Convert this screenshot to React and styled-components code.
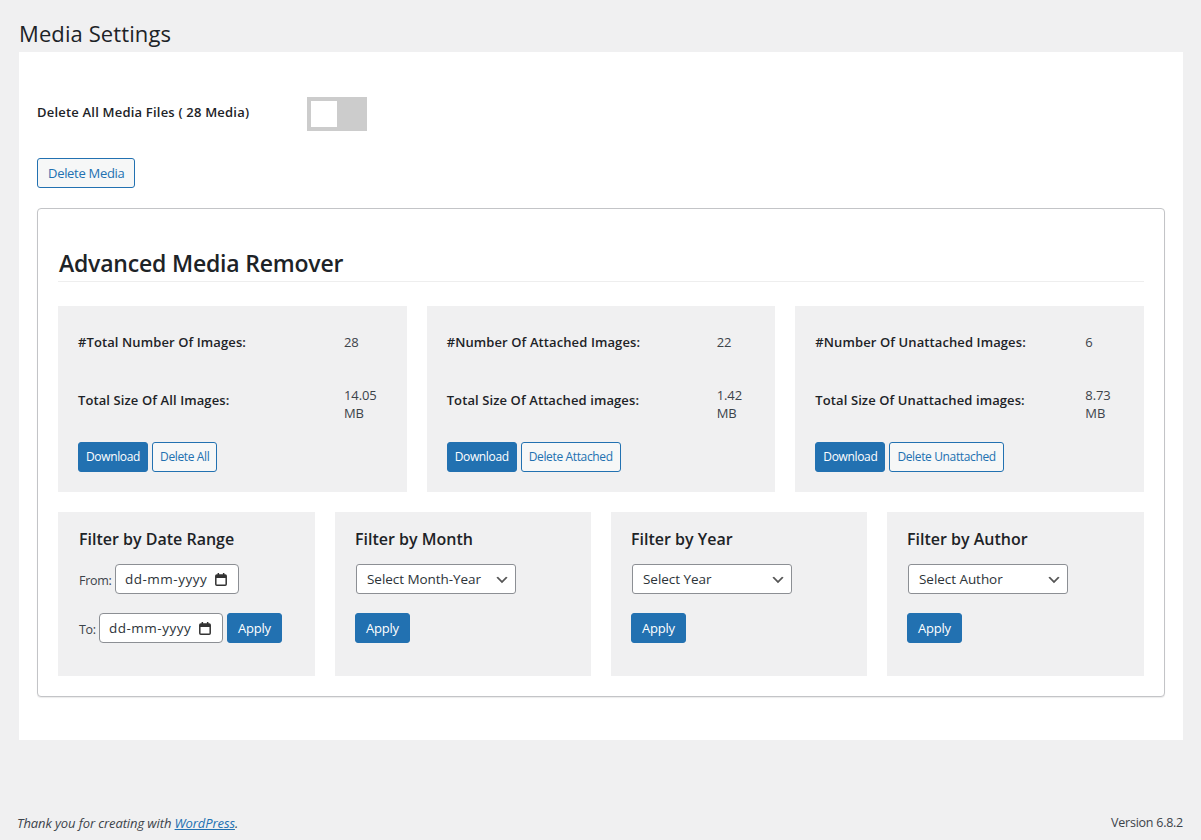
import React from "react";
import styled, { createGlobalStyle } from "styled-components";

const Global = createGlobalStyle`
  html, body { margin: 0; padding: 0; background: #f0f0f1; }
  body {
    font-family: "Open Sans", "Noto Sans", sans-serif;
    font-size: 13px;
    line-height: 1.4;
    color: #3c434a;
  }
  * { box-sizing: border-box; }
`;

const Page = styled.div`
  width: 1201px;
  height: 840px;
  padding-left: 19px;
  padding-right: 18px;
  display: flex;
  flex-direction: column;
  overflow: hidden;
`;

const Title = styled.h1`
  margin: 0;
  height: 52px;
  padding-top: 19px;
  font-size: 22px;
  font-weight: 400;
  line-height: 29px;
  color: #1d2327;
  letter-spacing: 0.1px;
`;

const Panel = styled.main`
  background: #fff;
  height: 688px;
  padding: 45px 18px 0;
`;

const ToggleRow = styled.div`
  display: flex;
  align-items: center;
  height: 34px;
`;

const ToggleLabel = styled.label`
  width: 270px;
  padding-bottom: 4px;
  font-size: 13px;
  font-weight: 600;
  color: #1d2327;
  letter-spacing: 0.2px;
`;

const Toggle = styled.span`
  display: block;
  width: 60px;
  height: 34px;
  padding: 4px;
  background: #ccc;
  &::before {
    content: "";
    display: block;
    width: 26px;
    height: 26px;
    background: #fff;
  }
`;

const Button = styled.button`
  display: inline-block;
  height: 30px;
  padding: 0 ${(p) => p.$px || 10}px;
  border-radius: 3px;
  border: 1px solid #2271b1;
  background: ${(p) => (p.$primary ? "#2271b1" : "#f6f7f7")};
  color: ${(p) => (p.$primary ? "#fff" : "#2271b1")};
  font-family: inherit;
  font-size: ${(p) => p.$fs || 12}px;
  letter-spacing: ${(p) => p.$ls ?? -0.3}px;
  line-height: 1;
  white-space: nowrap;
`;

const DeleteMediaWrap = styled.div`
  margin-top: 27px;
  height: 30px;
`;

const Card = styled.section`
  margin-top: 20px;
  height: 489px;
  padding: 20px;
  background: #fff;
  border: 1px solid #c3c4c7;
  border-radius: 4px;
  box-shadow: 0 1px 1px rgba(0, 0, 0, 0.08);
`;

const CardTitle = styled.h2`
  margin: 0;
  height: 53px;
  padding: 19px 0 0 1px;
  font-size: 23px;
  font-weight: 600;
  line-height: 31px;
  color: #1d2327;
  border-bottom: 1px solid #eee;
  letter-spacing: -0.2px;
`;

const StatsGrid = styled.div`
  margin-top: 24px;
  display: grid;
  grid-template-columns: repeat(3, minmax(0, 1fr));
  gap: 20px;
`;

const StatCard = styled.div`
  height: 186px;
  padding: 20px 20px 0;
  background: #f0f0f1;
  display: flex;
  flex-direction: column;
`;

const StatRow = styled.div`
  display: flex;
  align-items: center;
  height: ${(p) => p.$h}px;
`;

const StatLabel = styled.strong`
  width: ${(p) => p.$w}px;
  flex: none;
  font-weight: 600;
  color: #1d2327;
  letter-spacing: 0.1px;
`;

const StatValue = styled.span`
  width: 42px;
  margin-top: ${(p) => p.$mt || 0}px;
  line-height: 18px;
  letter-spacing: -0.1px;
`;

const ButtonRow = styled.div`
  display: flex;
  gap: 4px;
`;

const FilterGrid = styled.div`
  margin-top: 20px;
  display: grid;
  grid-template-columns: 257px 256px 256px 257px;
  gap: 20px;
`;

const FilterCard = styled.div`
  height: 164px;
  padding: 14px 20px 0 ${(p) => p.$pl || 20}px;
  background: #f0f0f1;
`;

const FilterTitle = styled.h3`
  margin: 0 0 12px;
  font-size: 16px;
  font-weight: 600;
  line-height: 26px;
  color: #1d2327;
  letter-spacing: 0;
`;

const DateRow = styled.div`
  display: flex;
  align-items: center;
  height: 30px;
  gap: 4px;
  margin-bottom: ${(p) => p.$mb || 0}px;
`;

const DateLabel = styled.span`
  width: ${(p) => p.$w}px;
  flex: none;
  font-size: 12.5px;
  padding-top: 3px;
  letter-spacing: -0.3px;
  white-space: nowrap;
`;

const DateField = styled.div`
  width: 124px;
  height: 30px;
  padding: 0 11px 0 9px;
  display: flex;
  align-items: center;
  justify-content: space-between;
  background: #fff;
  border: 1px solid #8c8f94;
  border-radius: 4px;
  color: #2c3338;
  font-size: 13.5px;
  letter-spacing: 0.5px;
`;

const Select = styled.select`
  display: block;
  width: 160px;
  height: 30px;
  margin: 0 0 19px 1px;
  padding: 0 24px 0 10px;
  appearance: none;
  background: #fff url("data:image/svg+xml,%3Csvg xmlns='http://www.w3.org/2000/svg' width='20' height='20' viewBox='0 0 20 20'%3E%3Cpath d='M5 6l5 5 5-5 2 1-7 7-7-7z' fill='%23555'/%3E%3C/svg%3E") no-repeat right 5px top 55%;
  background-size: 16px 16px;
  border: 1px solid #8c8f94;
  border-radius: 3px;
  color: #2c3338;
  font-family: inherit;
  font-size: 13.5px;
  letter-spacing: -0.05px;
`;

const Footer = styled.footer`
  display: flex;
  justify-content: space-between;
  margin-top: 74px;
  margin-left: -2px;
  line-height: 18px;
`;

const Thanks = styled.em`
  font-style: italic;
  font-size: 13px;
  letter-spacing: -0.1px;
`;

const Version = styled.span`
  font-size: 12.5px;
  letter-spacing: -0.25px;
`;

const FooterLink = styled.a`
  color: #2271b1;
  text-decoration: underline;
`;

const CalendarIcon = () => (
  <svg width="12" height="13" viewBox="0 0 12 13" aria-hidden="true">
    <rect x="0.8" y="2" width="10.4" height="10.2" rx="1" fill="none" stroke="#333" strokeWidth="1.5" />
    <path d="M1 2h10v3H1zM2.6 0h1.5v2.5H2.6zM7.9 0h1.5v2.5H7.9z" fill="#333" />
  </svg>
);

const DateInput = () => (
  <DateField>
    dd-mm-yyyy
    <CalendarIcon />
  </DateField>
);

const stats = [
  { a: "#Total Number Of Images:", b: "28", c: "Total Size Of All Images:", d: "14.05 MB", del: "Delete All", w: 266 },
  { a: "#Number Of Attached Images:", b: "22", c: "Total Size Of Attached images:", d: "1.42 MB", del: "Delete Attached", w: 270 },
  { a: "#Number Of Unattached Images:", b: "6", c: "Total Size Of Unattached images:", d: "8.73 MB", del: "Delete Unattached", w: 270 },
];

const filters = [
  { title: "Filter by Month", option: "Select Month-Year" },
  { title: "Filter by Year", option: "Select Year" },
  { title: "Filter by Author", option: "Select Author" },
];

export default function App() {
  return (
    <Page>
      <Global />
      <Title>Media Settings</Title>
      <Panel>
        <ToggleRow>
          <ToggleLabel>Delete All Media Files ( 28 Media)</ToggleLabel>
          <Toggle />
        </ToggleRow>
        <DeleteMediaWrap>
          <Button $fs={13} $ls={-0.3}>Delete Media</Button>
        </DeleteMediaWrap>
        <Card>
          <CardTitle>Advanced Media Remover</CardTitle>
          <StatsGrid>
            {stats.map((s) => (
              <StatCard key={s.a}>
                <StatRow $h={32}>
                  <StatLabel $w={s.w}>{s.a}</StatLabel>
                  <StatValue>{s.b}</StatValue>
                </StatRow>
                <StatRow $h={84}>
                  <StatLabel $w={s.w}>{s.c}</StatLabel>
                  <StatValue $mt={8}>{s.d}</StatValue>
                </StatRow>
                <ButtonRow>
                  <Button $primary $px={7} $ls={-0.35}>Download</Button>
                  <Button $px={7} $ls={-0.36}>{s.del}</Button>
                </ButtonRow>
              </StatCard>
            ))}
          </StatsGrid>
          <FilterGrid>
            <FilterCard $pl={21}>
              <FilterTitle>Filter by Date Range</FilterTitle>
              <DateRow $mb={19}>
                <DateLabel $w={32}>From:</DateLabel>
                <DateInput />
              </DateRow>
              <DateRow>
                <DateLabel $w={16}>To:</DateLabel>
                <DateInput />
                <Button $primary $fs={13} $px={10} $ls={-0.2}>Apply</Button>
              </DateRow>
            </FilterCard>
            {filters.map((f) => (
              <FilterCard key={f.title}>
                <FilterTitle>{f.title}</FilterTitle>
                <Select defaultValue={f.option}>
                  <option>{f.option}</option>
                </Select>
                <Button $primary $fs={13} $px={10} $ls={-0.2}>Apply</Button>
              </FilterCard>
            ))}
          </FilterGrid>
        </Card>
      </Panel>
      <Footer>
        <Thanks>
          Thank you for creating with <FooterLink href="#">WordPress</FooterLink>.
        </Thanks>
        <Version>Version 6.8.2</Version>
      </Footer>
    </Page>
  );
}
